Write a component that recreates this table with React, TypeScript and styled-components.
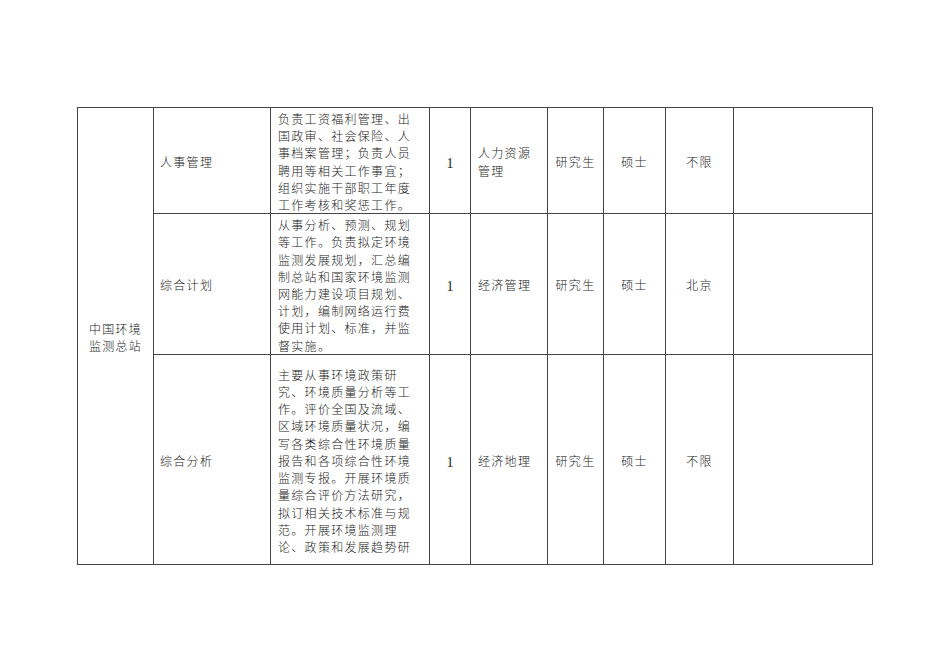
import styled, { createGlobalStyle } from "styled-components";

const GlobalStyle = createGlobalStyle`
  html, body {
    margin: 0;
    padding: 0;
    background: #ffffff;
  }
  body {
    font-family: "Liberation Serif", "Noto Sans CJK SC", serif;
    color: #1a1a1a;
  }
`;

const Page = styled.div`
  width: 950px;
  height: 672px;
  padding: 107px 0 0 77px;
  box-sizing: border-box;
`;

const Sheet = styled.div`
  display: grid;
  grid-template-columns: 76px 117px 159px 41px 77px 56px 62px 68px 139px;
  grid-template-rows: 106px 141px 210px;
  width: max-content;
  border-top: 1px solid #444;
  border-left: 1px solid #444;
`;

const Cell = styled.div<{ $align?: "left" | "center"; $pad?: number; $span?: number }>`
  display: flex;
  flex-direction: column;
  justify-content: center;
  align-items: ${(p) => (p.$align === "left" ? "flex-start" : "center")};
  padding: 6px ${(p) => p.$pad ?? 0}px 0;
  border-right: 1px solid #444;
  border-bottom: 1px solid #444;
  overflow: hidden;
  font-size: 12px;
  font-weight: 300;
  line-height: 17.2px;
  letter-spacing: 1.3px;
  white-space: nowrap;
  ${(p) => (p.$span ? `grid-row: span ${p.$span};` : "")}
`;

const Line = styled.span`
  display: block;
`;

const Num = styled.span`
  font-size: 14px;
  font-weight: 400;
  letter-spacing: 0;
`;

type Row = {
  post: string;
  duty: string[];
  count: string;
  major: string[];
  edu: string;
  degree: string;
  place: string;
};

const rows: Row[] = [
  {
    post: "人事管理",
    duty: [
      "负责工资福利管理、出",
      "国政审、社会保险、人",
      "事档案管理；负责人员",
      "聘用等相关工作事宜；",
      "组织实施干部职工年度",
      "工作考核和奖惩工作。",
    ],
    count: "1",
    major: ["人力资源", "管理"],
    edu: "研究生",
    degree: "硕士",
    place: "不限",
  },
  {
    post: "综合计划",
    duty: [
      "从事分析、预测、规划",
      "等工作。负责拟定环境",
      "监测发展规划，汇总编",
      "制总站和国家环境监测",
      "网能力建设项目规划、",
      "计划，编制网络运行费",
      "使用计划、标准，并监",
      "督实施。",
    ],
    count: "1",
    major: ["经济管理"],
    edu: "研究生",
    degree: "硕士",
    place: "北京",
  },
  {
    post: "综合分析",
    duty: [
      "主要从事环境政策研",
      "究、环境质量分析等工",
      "作。评价全国及流域、",
      "区域环境质量状况，编",
      "写各类综合性环境质量",
      "报告和各项综合性环境",
      "监测专报。开展环境质",
      "量综合评价方法研究，",
      "拟订相关技术标准与规",
      "范。开展环境监测理",
      "论、政策和发展趋势研",
    ],
    count: "1",
    major: ["经济地理"],
    edu: "研究生",
    degree: "硕士",
    place: "不限",
  },
];

export default function App() {
  return (
    <>
      <GlobalStyle />
      <Page>
        <Sheet>
          {rows.map((r, i) => (
            <>
              {i === 0 && (
                <Cell key="unit" $span={3}>
                  <Line>中国环境</Line>
                  <Line>监测总站</Line>
                </Cell>
              )}
              <Cell key={`post-${i}`} $align="left" $pad={6}>
                {r.post}
              </Cell>
              <Cell key={`duty-${i}`} $align="left" $pad={7}>
                {r.duty.map((l) => (
                  <Line key={l}>{l}</Line>
                ))}
              </Cell>
              <Cell key={`count-${i}`}>
                <Num>{r.count}</Num>
              </Cell>
              <Cell key={`major-${i}`} $align="left" $pad={7}>
                {r.major.map((l) => (
                  <Line key={l}>{l}</Line>
                ))}
              </Cell>
              <Cell key={`edu-${i}`}>{r.edu}</Cell>
              <Cell key={`degree-${i}`}>{r.degree}</Cell>
              <Cell key={`place-${i}`}>{r.place}</Cell>
              <Cell key={`note-${i}`} />
            </>
          ))}
        </Sheet>
      </Page>
    </>
  );
}
